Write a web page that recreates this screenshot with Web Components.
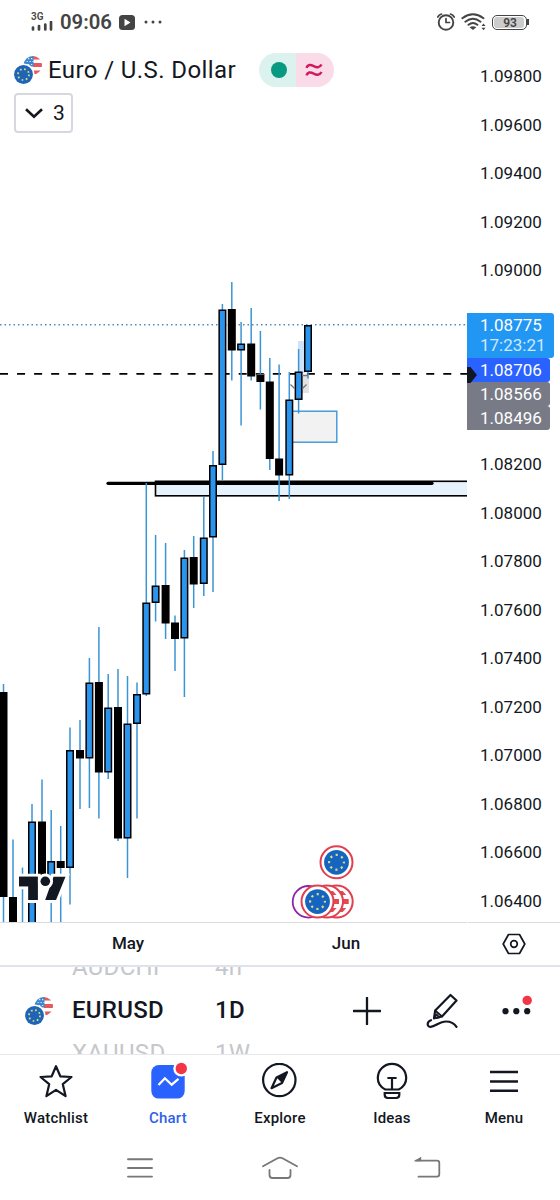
<!DOCTYPE html>
<html lang="en">
<head>
<meta charset="utf-8">
<title>EURUSD chart</title>
<style>
    body {
        margin: 0;
        width: 560px;
        height: 1200px;
        overflow: hidden;
        background: #fff;
        color: #131722;
        font-family: Roboto, "Liberation Sans", sans-serif;
    }
</style>
</head>
<body>
<trading-app></trading-app>

<script>
// 28x28 pair of round flags, EU in front of US
const PAIR_FLAG = `
    <svg width="28" height="28" viewBox="0 0 28 28">
        <defs><clipPath id="us"><circle cx="18.8" cy="9.3" r="9.2"/></clipPath></defs>
        <g clip-path="url(#us)">
            <rect x="9" width="20" height="20" fill="#fff"/>
            <path d="M19 0h9v3.4h-9zM19 7h9v4h-9zM9 14.6h19v4H9z" fill="#e5595d"/>
            <path d="M9 0h10.5v10.5H9z" fill="#3d86cf"/>
            <path d="M12.5 5.5h7M11 8.5h8M14 2.6h5" stroke="#d7e9fa" stroke-width="1.2" stroke-dasharray="1.3 1.7"/>
        </g>
        <circle cx="9.5" cy="18.5" r="11" fill="#fff"/>
        <circle cx="9.5" cy="18.5" r="9.4" fill="#1f64b5"/>
        <circle cx="9.5" cy="18.5" r="5.5" fill="none" stroke="#d5df8a" stroke-width="1.7" stroke-dasharray="1.7 2.62"/>
    </svg>`;

const ICONS = {
    pair: PAIR_FLAG,
    signal: `<svg width="22" height="11" viewBox="0 0 22 11"><path d="M2 6.5v2M8 5v3.500M14.300 3.500v5M20 1v7.500" stroke="#444" stroke-width="2.700" stroke-linecap="round"/></svg>`,
    play: `<svg width="16" height="15" viewBox="0 0 16 15"><rect width="16" height="15" rx="3.500" fill="#444"/><path d="M5.500 3.800v7.400l6-3.700z" fill="#fff"/></svg>`,
    dots: `<svg width="18" height="4" viewBox="0 0 18 4" fill="#444"><circle cx="2" cy="2" r="1.500"/><circle cx="9" cy="2" r="1.500"/><circle cx="16" cy="2" r="1.500"/></svg>`,
    alarm: `<svg width="18" height="18" viewBox="0 0 18 18" fill="none" stroke="#444" stroke-linecap="round"><circle cx="9" cy="9.500" r="7.300" stroke-width="1.900"/><path d="M9 5.500v4h3.500" stroke-width="1.700"/><path d="M.800 4Q2 1.800 4.500 1M17.200 4Q16 1.800 13.500 1" stroke-width="1.700"/></svg>`,
    wifi: `<svg width="25" height="18" viewBox="0 0 25 18" fill="none" stroke="#444" stroke-width="1.900" stroke-linecap="round"><path d="M1.300 5.200Q12 -2.600 22.500 5.200M4.300 8.700Q12 2.700 19.500 8.700M7.500 11.800Q12 8.300 16.400 11.800"/><path d="M8.500 14.300Q12 12 15.300 14.300L12 17z" fill="#444" stroke="none"/><path d="M20.500 13l2-2.500 2 2.500zM20.500 14.700l2 2.500 2-2.500z" fill="#444" stroke="none"/></svg>`,
    down: `<svg width="20" height="12" viewBox="0 0 20 12"><path d="M2 2.200l8 7.600 8-7.600" fill="none" stroke="#131722" stroke-width="2.600"/></svg>`,
    approx: `<svg width="18" height="14" viewBox="0 0 18 14"><path d="M1.500 4.800C2.500 1.500 5.500 1.200 8.500 3S14.500 5.200 16.500 1.500M1.500 12.300C2.500 9 5.500 8.700 8.500 10.500S14.500 12.700 16.500 9" fill="none" stroke="#d1195d" stroke-width="2.500"/></svg>`,
    hexagon: `<svg width="24" height="22" viewBox="0 0 24 22" fill="none" stroke="#131722" stroke-width="1.700" stroke-linejoin="round"><path d="M6.500 1.500h11L22.800 11l-5.300 9.500h-11L1.200 11z"/><circle cx="12" cy="11" r="3.300"/></svg>`,
    plus: `<svg width="28" height="28" viewBox="0 0 28 28"><path d="M14 .800v26.400M.800 14h26.400" stroke="#131722" stroke-width="2.300" stroke-linecap="round"/></svg>`,
    draw: `<svg width="32" height="36" viewBox="0 0 32 36" fill="none" stroke="#131722" stroke-width="2.200" stroke-linecap="round" stroke-linejoin="round"><path d="M24.500 2l6 5.500L16 23.500l-8 1.800 1.200-7.800z"/><path d="M9.200 17.500l6.800 6M8 25.300l2.500-4 3 3.200z" stroke-width="1.700"/><path d="M5 27.200C1 28.500.500 33.500 4.300 33.800 9 34.200 13 28.500 20 28.500c5.500 0 8.500 2.300 10.500 5.300"/></svg>`,
    more: `<svg width="32" height="32" viewBox="0 0 32 32" fill="#131722"><circle cx="4.500" cy="16.200" r="3.100"/><circle cx="15.300" cy="16.200" r="3.100"/><circle cx="26.200" cy="16.200" r="3.100"/><circle cx="26.200" cy="5.400" r="4.700" fill="#f23645"/></svg>`,
    star: `<svg width="36" height="36" viewBox="0 0 36 36"><path d="M18 3.200l4.300 10.100 11.200.700-8.700 7.200 2.800 12L18 26.800 8.400 33.200l2.800-12L2.500 14l11.200-.700z" fill="none" stroke="#131722" stroke-width="2.200" stroke-linejoin="round"/></svg>`,
    chart: `<svg width="38" height="38" viewBox="0 0 38 38"><rect x="2.300" y="3" width="33.400" height="33.600" rx="7.500" fill="#2962ff"/><path d="M9.500 23l6.400-6.800 6.800 6.500 6.800-5.800" fill="none" stroke="#fff" stroke-width="2.200"/><circle cx="32.300" cy="6.500" r="8" fill="#fff"/><circle cx="32.300" cy="6.500" r="5.700" fill="#f23645"/></svg>`,
    compass: `<svg width="36" height="36" viewBox="0 0 36 36"><circle cx="17.300" cy="17" r="16.200" fill="none" stroke="#131722" stroke-width="2.200"/><path d="M25 9.200L14.500 14.500 9.500 25.200 20 20z" fill="none" stroke="#131722" stroke-width="2.200" stroke-linejoin="round"/><path d="M25 9.200L14.500 14.500 20 20z" fill="#131722"/></svg>`,
    bulb: `<svg width="36" height="40" viewBox="0 0 36 40" fill="none" stroke="#131722" stroke-width="2.200"><path d="M11.300 28.500C6 25.800 3.800 21.500 3.800 17a14.200 14.200 0 0 1 28.400 0c0 4.500-2.200 8.800-7.500 11.500zM13.400 17h9.200M18 17v11.500" stroke-linejoin="round"/><path d="M10.700 32h14.600v1.800q0 3.200-3.200 3.200h-8.200q-3.200 0-3.200-3.200z"/></svg>`,
    menu: `<svg width="28" height="24" viewBox="0 0 28 24"><path d="M0 3h28M0 12.500h28M0 21.800h28" stroke="#131722" stroke-width="2.600"/></svg>`,
    recents: `<svg width="28" height="22" viewBox="0 0 28 22"><path d="M2 2.300h24M2 11h24M2 19.600h24" stroke="#777" stroke-width="1.900" stroke-linecap="round"/></svg>`,
    home: `<svg width="38" height="24" viewBox="0 0 38 24" fill="none" stroke="#777" stroke-width="1.800" stroke-linecap="round" stroke-linejoin="round"><path d="M2 10.300L16.500 2.200q2.500-1.200 5 0L36 10.300M8.500 14v5q0 3 3 3h15q3 0 3-3v-5"/></svg>`,
    back: `<svg width="28" height="24" viewBox="0 0 28 24"><path d="M3 4.700h21q2.300 0 2.300 2.300v11q0 2.700-2.300 2.700H5.500" fill="none" stroke="#777" stroke-width="1.800" stroke-linecap="round"/><path d="M.500 5.300L8.200.800v4.500z" fill="#777"/></svg>`
};

customElements.define('ui-icon',
    class extends HTMLElement {
        constructor() {
            super();
            this.attachShadow({mode: 'open'});
        }

        connectedCallback() {
            this.shadowRoot.innerHTML = `
    <style>
    :host { display: block; flex: none; }
    svg { display: block; }
    </style>
    ${ICONS[this.getAttribute('name')]}
`;
        }
    }
);

customElements.define('status-bar',
    class extends HTMLElement {
        constructor() {
            super();
            this.attachShadow({mode: 'open'}).innerHTML = `
    <style>
    :host {
        display: flex;
        align-items: center;
        box-sizing: border-box;
        height: 44px;
        padding: 0 32px 0 31px;
        color: #444;
    }
    .network {
        display: flex;
        flex-direction: column;
        width: 29px;
        font-size: 10px;
        line-height: 9px;
        font-weight: 600;
    }
    .time {
        width: 59px;
        font-size: 20.300px;
        font-weight: 600;
    }
    .dots { margin-left: 9px; }
    .alarm { margin-left: auto; }
    .wifi { margin: 0 6px; }
    .battery {
        box-sizing: border-box;
        width: 35px;
        height: 15px;
        border: 1.500px solid #444;
        border-radius: 5px;
        padding: 1px;
        margin-right: -1px;
    }
    .level {
        height: 11px;
        width: 28px;
        border-radius: 3px;
        background: #ccc;
        font-size: 12px;
        line-height: 12px;
        font-weight: 600;
        text-align: center;
        padding-left: 2px;
    }
    .tip { width: 2px; height: 6px; background: #444; margin: 0 -1px 0 1px; }
    </style>
    <div class="network"><span>3G</span><ui-icon name="signal"></ui-icon></div>
    <div class="time">09:06</div>
    <ui-icon name="play"></ui-icon>
    <ui-icon class="dots" name="dots"></ui-icon>
    <ui-icon class="alarm" name="alarm"></ui-icon>
    <ui-icon class="wifi" name="wifi"></ui-icon>
    <div class="battery"><div class="level">93</div></div>
    <div class="tip"></div>
`;
        }
    }
);

customElements.define('symbol-header',
    class extends HTMLElement {
        constructor() {
            super();
            this.attachShadow({mode: 'open'}).innerHTML = `
    <style>
    :host {
        display: flex;
        flex-direction: column;
        align-items: flex-start;
        box-sizing: border-box;
        height: 96px;
        padding: 9px 0 0 14px;
        gap: 6px;
    }
    .title {
        display: flex;
        align-items: center;
        height: 34px;
    }
    .name {
        box-sizing: border-box;
        width: 217px;
        padding-left: 6px;
        font-size: 24px;
        letter-spacing: .400px;
        white-space: nowrap;
    }
    .pill {
        display: grid;
        grid-template-columns: 37px 38px;
        height: 34px;
        border-radius: 17px;
        overflow: hidden;
    }
    .pill > div { display: flex; align-items: center; }
    .open { background: #dcf2ee; padding-left: 12px; }
    .open::before {
        content: '';
        width: 16px;
        height: 16px;
        border-radius: 50%;
        background: #089981;
    }
    .delay { background: #fadce8; padding-left: 9px; }
    .count {
        display: flex;
        align-items: center;
        gap: 9px;
        box-sizing: border-box;
        width: 59px;
        height: 40px;
        padding-left: 9px;
        border: 2px solid #d6d8df;
        border-radius: 4px;
        font-size: 21px;
    }
    .count ui-icon { margin-left: -1px; }
    </style>
    <div class="title">
        <ui-icon name="pair"></ui-icon>
        <div class="name"><slot></slot></div>
        <div class="pill">
            <div class="open"></div>
            <div class="delay"><ui-icon name="approx"></ui-icon></div>
        </div>
    </div>
    <div class="count"><ui-icon name="down"></ui-icon>3</div>
`;
        }
    }
);

// centre x, high, body top, body bottom, low, direction
const CANDLES = [
    [3.5, 684, 692, 897, 922, 'down'],
    [13, 839.5, 897, 924, 924, 'down'],
    [22.5, 867.5, 926, 926, 926, 'up'],
    [32, 804, 821.5, 926, 926, 'up'],
    [42, 779.5, 821.5, 875, 877, 'down'],
    [51.2, 810, 861, 880, 922, 'up'],
    [60.7, 826, 861, 868, 922, 'down'],
    [70, 727.5, 750, 868, 904.5, 'up'],
    [80, 720, 750, 758.5, 809, 'down'],
    [89.4, 658, 682.5, 758.5, 808, 'up'],
    [98.9, 627, 682, 772.5, 818.5, 'down'],
    [108.2, 674, 707.5, 772.5, 779, 'up'],
    [118, 669, 707, 838.5, 841, 'down'],
    [127.5, 676, 723.5, 838.5, 878, 'up'],
    [137, 682.5, 694, 724, 818.5, 'up'],
    [146.3, 483, 602.5, 694.5, 696, 'up'],
    [155.6, 535, 585.5, 603, 621.5, 'up'],
    [165.6, 543, 585, 623.5, 639, 'down'],
    [175, 615.5, 622.5, 639, 671, 'down'],
    [184.4, 550, 557.5, 638.5, 697, 'up'],
    [193.7, 536, 557, 584.5, 608, 'down'],
    [203.8, 497, 537.5, 584, 596, 'up'],
    [213, 451, 465, 537.5, 592, 'up'],
    [222.4, 304, 309.5, 465, 480, 'up'],
    [231.8, 282, 309, 350.5, 380.5, 'down'],
    [241.1, 322, 343.5, 350.5, 425.5, 'up'],
    [251.2, 308, 343.5, 376.5, 380.5, 'down'],
    [260.4, 331, 374, 382, 409.5, 'down'],
    [269.8, 358, 381.5, 459, 470, 'down'],
    [279.1, 364.5, 458.5, 475.5, 501, 'down'],
    [289.3, 372, 399.5, 475.5, 499, 'up'],
    [298.6, 349, 371.5, 400, 413.5, 'up'],
    [308, 325, 325, 372, 378.5, 'up']
];

customElements.define('candle-chart',
    class extends HTMLElement {
        constructor() {
            super();
            this.attachShadow({mode: 'open'});
            this.render();
        }

        candle([x, high, top, bottom, low, type]) {
            const fill = type === 'up' ? '#2b94ec' : '#000';
            return `<path d="M${x} ${high}V${low}" stroke="#3b94d3" stroke-width="1.500"/>
                <rect x="${x - 3.25}" y="${top + .75}" width="6.500" height="${Math.max(bottom - top - 1.5, .5)}" fill="${fill}" stroke="#000" stroke-width="1.500"/>`;
        }

        euEvent(x, y) {
            return `<circle cx="${x}" cy="${y}" r="16" fill="#fff" stroke="#e0404f" stroke-width="2"/>
                <circle cx="${x}" cy="${y}" r="12.400" fill="#1565c0"/>
                <circle cx="${x}" cy="${y}" r="7.400" fill="none" stroke="#d9dc85" stroke-width="2.200" stroke-dasharray="2.200 3.610" stroke-dashoffset="1.100"/>`;
        }

        usEvent(x, y) {
            return `<circle cx="${x}" cy="${y}" r="16" fill="#fff" stroke="#e0404f" stroke-width="2"/>
                <path d="M${x - 8} ${y - 10.5}h14l3.500 4h-17.500zM${x - 8} ${y - 2.5}h20v5h-20zM${x - 8} ${y + 6.5}h17.500l-3.500 4h-14z" fill="#e5494d"/>`;
        }

        render() {
            this.shadowRoot.innerHTML = `
    <style>
    :host { display: block; }
    svg { display: block; }
    </style>
    <svg width="467" height="782" viewBox="0 140 467 782">
        <rect x="155.500" y="481.300" width="330" height="14.500" fill="#e6f3fd" stroke="#000" stroke-width="1.600"/>
        <path d="M108 483.300H432" stroke="#000" stroke-width="3.200" stroke-linecap="round"/>
        <path d="M0 324.700H467" stroke="#4c8fbd" stroke-width="1.500" stroke-dasharray="1.500 3"/>
        <path d="M0 373.800H467" stroke="#000" stroke-width="1.700" stroke-dasharray="8 9.050"/>
        <rect x="290" y="411.200" width="46.800" height="31" fill="#f2f2f2" stroke="#3d94d8" stroke-width="1.400"/>
        <rect x="298" y="341" width="7" height="32" fill="#cfe2fa"/>
        <rect x="301" y="376" width="8" height="17" fill="#e2e2e2"/>
        ${CANDLES.map((c) => this.candle(c)).join('')}
        <path d="M290.500 384.500l4 4M306.500 384.500l-4 4M302 375.500h6" stroke="#777" stroke-width="1.300"/>
        <path d="M256.500 374.300h8" stroke="#777" stroke-width="1"/>
        <g stroke="#fff" stroke-width="6" paint-order="stroke" fill="#131722">
            <path d="M19 876.700h18.700v23.400h-9.300v-13.800H19z"/>
            <path d="M53.500 876.700h12L56 900.100H45.200z"/>
            <circle cx="45.300" cy="881.300" r="4.800"/>
        </g>
        <path d="M19 876.700h18.700v23.400h-9.300v-13.800H19z" fill="#131722"/>
        ${this.euEvent(336.5, 862.3)}
        <circle cx="308.500" cy="901.800" r="15.800" fill="#fff" stroke="#8e24aa" stroke-width="1.800"/>
        ${this.usEvent(336.7, 901.6)}
        ${this.usEvent(327, 901.6)}
        ${this.euEvent(317.5, 901.6)}
    </svg>
`;
        }
    }
);

customElements.define('price-scale',
    class extends HTMLElement {
        constructor() {
            super();
            const row = (price) => `<div class="row">${price}</div>`;
            const above = ['1.09800', '1.09600', '1.09400', '1.09200', '1.09000'];
            const below = ['1.08200', '1.08000', '1.07800', '1.07600', '1.07400', '1.07200',
                '1.07000', '1.06800', '1.06600', '1.06400'];
            this.attachShadow({mode: 'open'}).innerHTML = `
    <style>
    :host {
        display: flex;
        flex-direction: column;
        box-sizing: border-box;
        height: 878px;
        padding-top: 8.200px;
        overflow: hidden;
        font-size: 17px;
    }
    .row {
        flex: none;
        height: 48.530px;
        line-height: 48.530px;
        padding-left: 13px;
    }
    .tags {
        flex: none;
        box-sizing: border-box;
        height: 145.590px;
        padding-top: 18px;
        color: #fff;
    }
    .tag {
        display: flex;
        align-items: center;
        box-sizing: border-box;
        width: 83px;
        height: 24px;
        padding-left: 13px;
        background: #787b86;
        border-radius: 0 3px 3px 0;
    }
    .last {
        flex-direction: column;
        align-items: flex-start;
        justify-content: center;
        width: 87px;
        height: 45px;
        line-height: 20px;
        background: #2196f3;
    }
    .last span + span { color: #cde8fc; }
    .line { background: #2962ff; padding-left: 0; }
    .line svg { margin: 10px 3px 0 0; }
    </style>
    ${above.map(row).join('')}
    <div class="tags">
        <div class="tag last"><span>1.08775</span><span>17:23:21</span></div>
        <div class="tag line">
            <svg width="10" height="16" viewBox="0 0 10 16"><path d="M0 0h3.500L10 8l-6.500 8H0z" fill="#131722"/></svg>
            1.08706
        </div>
        <div class="tag">1.08566</div>
        <div class="tag">1.08496</div>
    </div>
    ${below.map(row).join('')}
`;
        }
    }
);

customElements.define('time-scale',
    class extends HTMLElement {
        constructor() {
            super();
            this.attachShadow({mode: 'open'}).innerHTML = `
    <style>
    :host {
        display: grid;
        grid-template-columns: 467px 93px;
        box-sizing: border-box;
        height: 45px;
        border-bottom: 2px solid #e0e3eb;
        font-size: 17px;
        font-weight: 500;
    }
    .months {
        display: grid;
        grid-template-columns: 218px 218px;
        padding: 0 0 2px 19px;
        align-items: center;
        text-align: center;
    }
    .months, .settings { border-top: 1px solid #d9dbe1; }
    .settings {
        display: flex;
        align-items: center;
        justify-content: center;
        margin-left: 1px;
    }
    </style>
    <div class="months"><span>May</span><span>Jun</span></div>
    <div class="settings"><ui-icon name="hexagon"></ui-icon></div>
`;
        }
    }
);

customElements.define('picker-wheel',
    class extends HTMLElement {
        constructor() {
            super();
            this.attachShadow({mode: 'open'});
        }

        connectedCallback() {
            const [previous, current, next] = this.getAttribute('items').split(',');
            this.shadowRoot.innerHTML = `
    <style>
    :host {
        display: flex;
        flex-direction: column;
        justify-content: center;
        height: 87px;
        overflow: hidden;
        font-size: 24px;
        line-height: 43px;
        letter-spacing: .300px;
    }
    div { flex: none; height: 43px; }
    .near { color: #c6c7ca; }
    .current { font-weight: 500; }
    </style>
    <div class="near">${previous}</div>
    <div class="current">${current}</div>
    <div class="near">${next}</div>
`;
        }
    }
);

customElements.define('symbol-bar',
    class extends HTMLElement {
        constructor() {
            super();
            this.attachShadow({mode: 'open'}).innerHTML = `
    <style>
    :host {
        display: grid;
        grid-template-columns: 47px 143px 113px 76px 75px 1fr;
        align-items: center;
        box-sizing: border-box;
        height: 88px;
        padding-left: 25px;
        border-bottom: 1px solid #e6e8ee;
    }
    .plus { margin-left: 25px; }
    .draw { margin-left: 22px; }
    .more { margin-left: 22px; }
    </style>
    <ui-icon name="pair"></ui-icon>
    <picker-wheel items="AUDCHF,EURUSD,XAUUSD"></picker-wheel>
    <picker-wheel items="4h,1D,1W"></picker-wheel>
    <ui-icon class="plus" name="plus"></ui-icon>
    <ui-icon class="draw" name="draw"></ui-icon>
    <ui-icon class="more" name="more"></ui-icon>
`;
        }
    }
);

customElements.define('nav-item',
    class extends HTMLElement {
        constructor() {
            super();
            this.attachShadow({mode: 'open'});
        }

        connectedCallback() {
            this.shadowRoot.innerHTML = `
    <style>
    :host {
        display: flex;
        flex-direction: column;
        align-items: center;
        font-size: 15px;
        font-weight: 500;
        letter-spacing: .2px;
    }
    :host([selected]) { color: #2f62e8; }
    .icon {
        display: flex;
        align-items: center;
        justify-content: center;
        height: 40px;
    }
    .label { line-height: 20px; margin-top: 7px; }
    </style>
    <div class="icon"><ui-icon name="${this.getAttribute('icon')}"></ui-icon></div>
    <div class="label"><slot></slot></div>
`;
        }
    }
);

customElements.define('trading-app',
    class extends HTMLElement {
        constructor() {
            super();
            this.attachShadow({mode: 'open'}).innerHTML = `
    <style>
    :host {
        display: flex;
        flex-direction: column;
        width: 560px;
        height: 1200px;
    }
    .chart {
        display: grid;
        grid-template-columns: 467px 93px;
        height: 878px;
    }
    .tabs {
        display: grid;
        grid-template-columns: repeat(5, 1fr);
        height: 80px;
        padding-top: 6px;
    }
    .system {
        display: grid;
        grid-template-columns: 140px 140px 154px;
        justify-items: center;
        align-items: center;
        padding-left: 70px;
        height: 54px;
    }
    </style>
    <status-bar></status-bar>
    <div class="chart">
        <div>
            <symbol-header>Euro / U.S. Dollar</symbol-header>
            <candle-chart></candle-chart>
        </div>
        <price-scale></price-scale>
    </div>
    <time-scale></time-scale>
    <symbol-bar></symbol-bar>
    <div class="tabs">
        <nav-item icon="star">Watchlist</nav-item>
        <nav-item icon="chart" selected>Chart</nav-item>
        <nav-item icon="compass">Explore</nav-item>
        <nav-item icon="bulb">Ideas</nav-item>
        <nav-item icon="menu">Menu</nav-item>
    </div>
    <div class="system">
        <ui-icon name="recents"></ui-icon>
        <ui-icon name="home"></ui-icon>
        <ui-icon name="back"></ui-icon>
    </div>
`;
        }
    }
);
</script>
</body>
</html>
